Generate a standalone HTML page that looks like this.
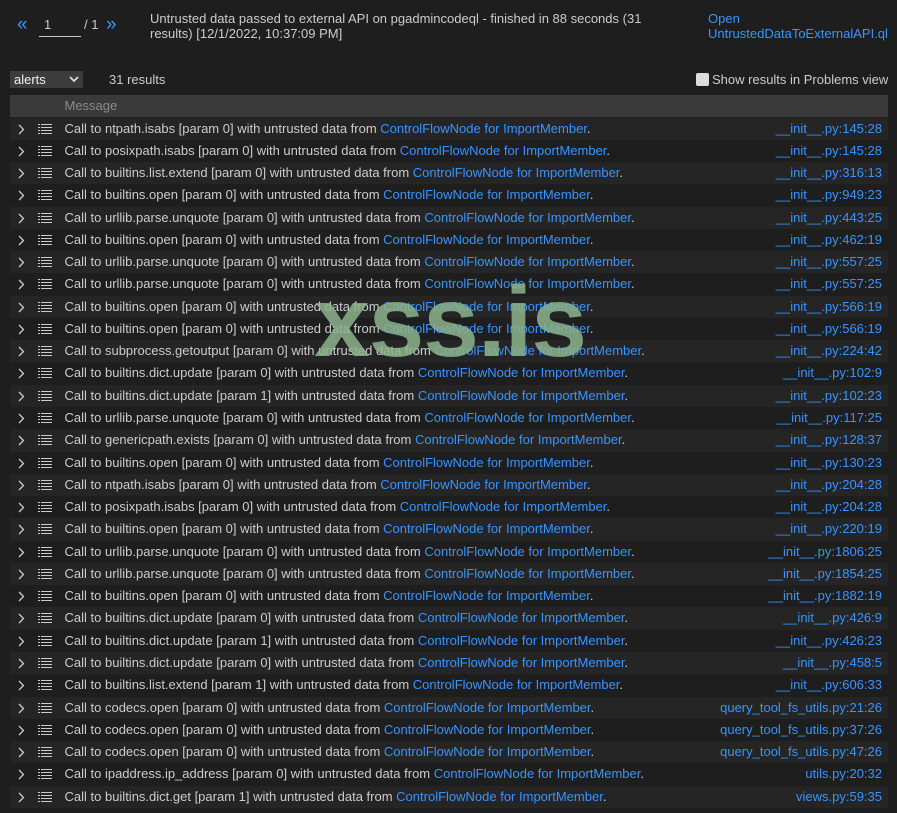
<!DOCTYPE html>
<html><head><meta charset="utf-8"><style>
html,body{margin:0;padding:0;background:#1e1e1e;width:897px;height:813px;overflow:hidden;font-family:"Liberation Sans",sans-serif;font-size:13px;color:#cccccc;position:relative}
a{color:#3794ff;text-decoration:none}
.abs{position:absolute}
.row{position:absolute;left:10px;width:878px;height:22.27px;line-height:22px;white-space:nowrap}
.row.o{background:#252526}
.chev{position:absolute;left:6px;top:6px}
.lst{position:absolute;left:28px;top:6px}
.msg{position:absolute;left:54.5px;top:0}
.loc{position:absolute;right:6px;top:0}
</style></head><body>
<div class="abs" style="left:17px;top:14px;color:#3794ff;font-size:19px">«</div>
<div class="abs" style="left:39px;top:17px;width:42px;border-bottom:1px solid #ccc;padding-bottom:4px;padding-left:5px;box-sizing:border-box">1</div>
<div class="abs" style="left:84px;top:17px">/ 1</div>
<div class="abs" style="left:106px;top:14px;color:#3794ff;font-size:19px">»</div>
<div class="abs" style="left:150px;top:11px;width:520px;line-height:15px">Untrusted data passed to external API on pgadmincodeql - finished in 88 seconds (31 results) [12/1/2022, 10:37:09 PM]</div>
<div class="abs" style="left:708px;top:11px;line-height:15px;color:#3794ff">Open<br>UntrustedDataToExternalAPI.ql</div>
<div class="abs" style="left:10px;top:71px;width:73px;height:17px;background:#3c3c3c;line-height:17px;padding-left:4px;box-sizing:border-box;color:#f0f0f0">alerts<svg style="position:absolute;right:4px;top:5px" width="10" height="7"><path d="M1 1l4 4 4-4" stroke="#ddd" stroke-width="1.8" fill="none"/></svg></div>
<div class="abs" style="left:109px;top:72px">31 results</div>
<div class="abs" style="left:696px;top:73px;width:13px;height:13px;background:#ddd;border-radius:2px"></div>
<div class="abs" style="left:712px;top:72px">Show results in Problems view</div>
<div class="abs" style="left:10px;top:95px;width:878px;height:22px;background:#3a3a3a;line-height:21px"><span style="position:absolute;left:54.5px;color:#8a8a8a">Message</span></div>
<div id="rows"></div>
<div class="abs" style="left:314px;top:262px;font-size:100px;font-weight:bold;color:rgba(140,180,140,0.85);letter-spacing:-1px;line-height:120px">xss.is</div>
<script>
var d=[
["Call to ntpath.isabs [param 0] with untrusted data from ","__init__.py:145:28"],
["Call to posixpath.isabs [param 0] with untrusted data from ","__init__.py:145:28"],
["Call to builtins.list.extend [param 0] with untrusted data from ","__init__.py:316:13"],
["Call to builtins.open [param 0] with untrusted data from ","__init__.py:949:23"],
["Call to urllib.parse.unquote [param 0] with untrusted data from ","__init__.py:443:25"],
["Call to builtins.open [param 0] with untrusted data from ","__init__.py:462:19"],
["Call to urllib.parse.unquote [param 0] with untrusted data from ","__init__.py:557:25"],
["Call to urllib.parse.unquote [param 0] with untrusted data from ","__init__.py:557:25"],
["Call to builtins.open [param 0] with untrusted data from ","__init__.py:566:19"],
["Call to builtins.open [param 0] with untrusted data from ","__init__.py:566:19"],
["Call to subprocess.getoutput [param 0] with untrusted data from ","__init__.py:224:42"],
["Call to builtins.dict.update [param 0] with untrusted data from ","__init__.py:102:9"],
["Call to builtins.dict.update [param 1] with untrusted data from ","__init__.py:102:23"],
["Call to urllib.parse.unquote [param 0] with untrusted data from ","__init__.py:117:25"],
["Call to genericpath.exists [param 0] with untrusted data from ","__init__.py:128:37"],
["Call to builtins.open [param 0] with untrusted data from ","__init__.py:130:23"],
["Call to ntpath.isabs [param 0] with untrusted data from ","__init__.py:204:28"],
["Call to posixpath.isabs [param 0] with untrusted data from ","__init__.py:204:28"],
["Call to builtins.open [param 0] with untrusted data from ","__init__.py:220:19"],
["Call to urllib.parse.unquote [param 0] with untrusted data from ","__init__.py:1806:25"],
["Call to urllib.parse.unquote [param 0] with untrusted data from ","__init__.py:1854:25"],
["Call to builtins.open [param 0] with untrusted data from ","__init__.py:1882:19"],
["Call to builtins.dict.update [param 0] with untrusted data from ","__init__.py:426:9"],
["Call to builtins.dict.update [param 1] with untrusted data from ","__init__.py:426:23"],
["Call to builtins.dict.update [param 0] with untrusted data from ","__init__.py:458:5"],
["Call to builtins.list.extend [param 1] with untrusted data from ","__init__.py:606:33"],
["Call to codecs.open [param 0] with untrusted data from ","query_tool_fs_utils.py:21:26"],
["Call to codecs.open [param 0] with untrusted data from ","query_tool_fs_utils.py:37:26"],
["Call to codecs.open [param 0] with untrusted data from ","query_tool_fs_utils.py:47:26"],
["Call to ipaddress.ip_address [param 0] with untrusted data from ","utils.py:20:32"],
["Call to builtins.dict.get [param 1] with untrusted data from ","views.py:59:35"]];
var h='';
var chev='<svg class="chev" width="10" height="11"><path d="M3 1l4.5 4.5L3 10" stroke="#ccc" stroke-width="1.3" fill="none"/></svg>';
var lst='<svg class="lst" width="16" height="11"><g fill="#ccc"><rect x="0" y="0" width="2" height="1"/><rect x="3" y="0" width="11" height="1"/><rect x="0" y="3" width="2" height="1"/><rect x="3" y="3" width="11" height="1"/><rect x="0" y="6" width="2" height="1"/><rect x="3" y="6" width="11" height="1"/><rect x="0" y="9" width="2" height="1"/><rect x="3" y="9" width="11" height="1"/></g></svg>';
for(var i=0;i<d.length;i++){
h+='<div class="row'+(i%2==0?' o':'')+'" style="top:'+(117.5+i*22.27)+'px">'+chev+lst+'<span class="msg">'+d[i][0]+'<a>ControlFlowNode for ImportMember</a>.</span><a class="loc">'+d[i][1]+'</a></div>';}
document.getElementById('rows').innerHTML=h;
</script>
</body></html>
